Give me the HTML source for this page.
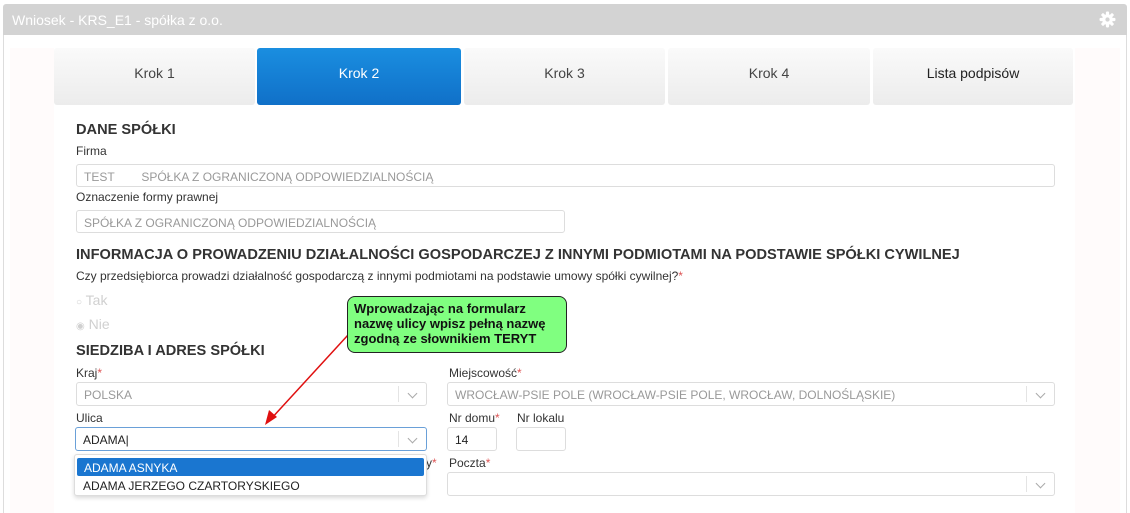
<!DOCTYPE html>
<html><head><meta charset="utf-8"><style>
*{box-sizing:border-box;margin:0;padding:0}
body{width:1130px;height:513px;background:#fff;font-family:"Liberation Sans",Arial,sans-serif;font-size:12px;color:#333;position:relative;overflow:hidden}
.a{position:absolute}
.hdr{left:3px;top:4px;width:1124px;height:31px;background:#d3d3d3;border-radius:3px 3px 0 0;color:#fff;font-size:14px;padding:8px 9px}
.frame{left:3px;top:35px;width:1124px;height:478px;border-left:1px solid #ddd;border-right:1px solid #ddd}
.side{top:48px;height:465px;background:#fffbfb}
.tab{top:48px;height:57px;background:linear-gradient(#fafafa,#ececec);color:#444;font-size:14px;text-align:center;line-height:50px;border-radius:3px}
.tab.on{background:linear-gradient(#1a8ee0,#1070c8);color:#fff}
.h{font-size:14.6px;font-weight:bold;color:#333}
.lbl{font-size:12px;color:#333}
.in{border:1px solid #ddd;border-radius:3px;height:23px;font-size:12px;color:#999;padding:5px 7px;background:#fff}
.r{color:#d55}
.chev{position:absolute;right:0;top:3px;width:28px;height:calc(100% - 6px);border-left:1px solid #e4e4e4}
.chev:after{content:"";position:absolute;left:10px;top:4px;width:6px;height:6px;border-right:1.5px solid #aaa;border-bottom:1.5px solid #aaa;transform:rotate(45deg)}
</style></head><body>
<div class="a hdr">Wniosek - KRS_E1 - spółka z o.o.</div>
<svg class="a" style="left:1099px;top:11px" width="17" height="17" viewBox="0 0 16 16"><g fill="#fff"><circle cx="8" cy="8" r="5"/><rect x="6.5" y="0.5" width="3" height="15" rx="1"/><rect x="0.5" y="6.5" width="15" height="3" rx="1"/><rect x="6.5" y="0.5" width="3" height="15" rx="1" transform="rotate(45 8 8)"/><rect x="6.5" y="0.5" width="3" height="15" rx="1" transform="rotate(-45 8 8)"/></g><circle cx="8" cy="8" r="2" fill="#d3d3d3"/></svg>
<div class="a frame"></div>
<div class="a side" style="left:10px;width:44px"></div>
<div class="a side" style="left:1075px;width:45px"></div>
<div class="a tab" style="left:54px;width:201px">Krok 1</div>
<div class="a tab on" style="left:257px;width:204px">Krok 2</div>
<div class="a tab" style="left:464px;width:201px">Krok 3</div>
<div class="a tab" style="left:668px;width:202px">Krok 4</div>
<div class="a tab" style="left:873px;width:200px;color:#222">Lista podpisów</div>

<div class="a h" style="left:76px;top:122px">DANE SPÓŁKI</div>
<div class="a lbl" style="left:76px;top:144px">Firma</div>
<div class="a in" style="left:76px;top:164px;width:979px">TEST&nbsp;&nbsp;&nbsp;&nbsp;&nbsp;&nbsp;&nbsp;&nbsp;SPÓŁKA Z OGRANICZONĄ ODPOWIEDZIALNOŚCIĄ</div>
<div class="a lbl" style="left:76px;top:190px">Oznaczenie formy prawnej</div>
<div class="a in" style="left:76px;top:210px;width:489px">SPÓŁKA Z OGRANICZONĄ ODPOWIEDZIALNOŚCIĄ</div>

<div class="a h" style="left:76px;top:247px">INFORMACJA O PROWADZENIU DZIAŁALNOŚCI GOSPODARCZEJ Z INNYMI PODMIOTAMI NA PODSTAWIE SPÓŁKI CYWILNEJ</div>
<div class="a lbl" style="left:76px;top:269px">Czy przedsiębiorca prowadzi działalność gospodarczą z innymi podmiotami na podstawie umowy spółki cywilnej?<span class="r">*</span></div>
<div class="a" style="left:76px;top:292px;color:#d0d0d0;font-size:14px"><span style="font-size:10px">○</span> Tak</div>
<div class="a" style="left:76px;top:316px;color:#d0d0d0;font-size:14px"><span style="font-size:10px">◉</span> Nie</div>

<div class="a h" style="left:76px;top:343px">SIEDZIBA I ADRES SPÓŁKI</div>
<div class="a lbl" style="left:76px;top:366px">Kraj<span class="r">*</span></div>
<div class="a in" style="left:76px;top:382px;width:351px;height:24px">POLSKA<div class="chev"></div></div>
<div class="a lbl" style="left:449px;top:366px">Miejscowość<span class="r">*</span></div>
<div class="a in" style="left:447px;top:382px;width:608px;height:24px">WROCŁAW-PSIE POLE (WROCŁAW-PSIE POLE, WROCŁAW, DOLNOŚLĄSKIE)<div class="chev"></div></div>
<div class="a lbl" style="left:76px;top:411px">Ulica</div>
<div class="a in" style="left:75px;top:427px;width:352px;height:24px;border-color:#6aa0d8;color:#222">ADAMA|<div class="chev"></div></div>
<div class="a lbl" style="left:449px;top:411px">Nr domu<span class="r">*</span></div>
<div class="a lbl" style="left:517px;top:411px">Nr lokalu</div>
<div class="a in" style="left:447px;top:427px;width:50px;height:24px;color:#222">14</div>
<div class="a in" style="left:516px;top:427px;width:50px;height:24px"></div>
<div class="a lbl" style="left:426px;top:456px">y<span class="r">*</span></div>
<div class="a lbl" style="left:449px;top:456px">Poczta<span class="r">*</span></div>
<div class="a in" style="left:447px;top:472px;width:608px;height:24px"><div class="chev"></div></div>
<div class="a" style="left:74px;top:454px;width:353px;height:42px;background:#fff;border:1px solid #ddd;border-radius:3px;box-shadow:0 2px 4px rgba(0,0,0,.15)">
<div style="margin:3px 2px 0;height:18px;background:#1a76d0;color:#fff;border-radius:2px;padding:3px 7px">ADAMA ASNYKA</div>
<div style="padding:3px 8px;color:#222">ADAMA JERZEGO CZARTORYSKIEGO</div></div>

<svg class="a" style="left:260px;top:330px" width="100" height="100"><line x1="88" y1="5" x2="10" y2="90" stroke="#e01010" stroke-width="1.5"/><polygon points="5,95 9,80 17,87" fill="#e01010"/></svg>
<div class="a" style="left:347px;top:296px;width:220px;height:57px;background:#80ff80;border:1px solid #222;border-radius:8px;font-size:13px;font-weight:bold;color:#111;padding:4px 6px;line-height:15px;font-family:'Liberation Sans Narrow','Liberation Sans',sans-serif">Wprowadzając na formularz nazwę ulicy wpisz pełną nazwę zgodną ze słownikiem TERYT</div>
</body></html>
